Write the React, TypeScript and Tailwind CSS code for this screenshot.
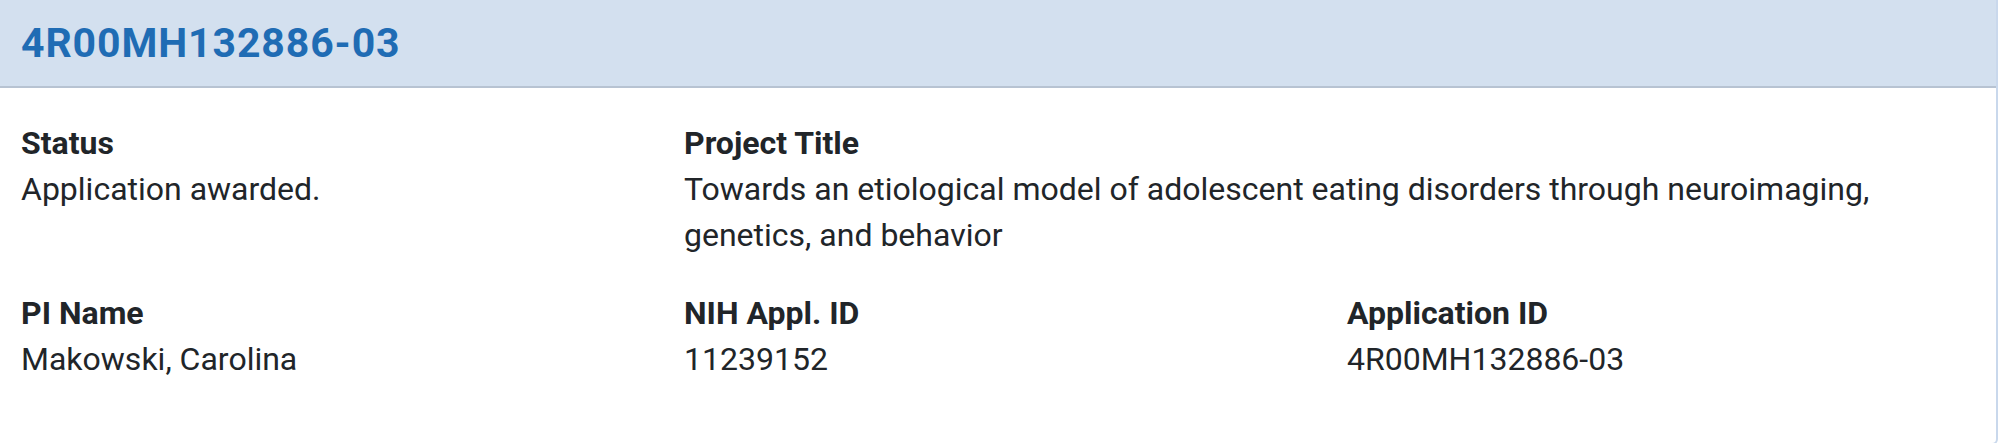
import React from "react";

const fields = [
  { label: "Status", value: "Application awarded.", span: false },
  {
    label: "Project Title",
    value:
      "Towards an etiological model of adolescent eating disorders through neuroimaging, genetics, and behavior",
    span: true,
  },
  { label: "PI Name", value: "Makowski, Carolina", span: false },
  { label: "NIH Appl. ID", value: "11239152", span: false },
  { label: "Application ID", value: "4R00MH132886-03", span: false },
];

const App = () => {
  return (
    <div className="w-[2000px] h-[443px] overflow-hidden bg-white font-['Roboto',sans-serif] text-[#212529]">
      <div className="w-[1998px] h-[445px] border-r-2 border-b-2 border-[#c9d8ec] rounded-br-md overflow-hidden flex flex-col">
        {/* Header */}
        <div className="h-[88px] shrink-0 bg-[#d3e0ef] border-b-2 border-[#b7c3d2] flex items-center pl-[21px]">
          <h2 className="text-[41px] font-bold leading-none text-[#1f6cb4] tracking-[0.9px]">
            4R00MH132886-03
          </h2>
        </div>

        {/* Body */}
        <div className="grid grid-cols-[663px_663px_1fr] gap-y-[32px] pl-[21px] pt-[32px]">
          {fields.map((f) => (
            <div key={f.label} className={f.span ? "col-span-2" : ""}>
              <div className="text-[32px] leading-[46px] font-bold">
                {f.label}
              </div>
              <div
                className={
                  "text-[32px] leading-[46px]" +
                  (f.span ? " max-w-[1230px]" : "")
                }
              >
                {f.value}
              </div>
            </div>
          ))}
          <div></div>
        </div>
      </div>
    </div>
  );
};

export default App;
